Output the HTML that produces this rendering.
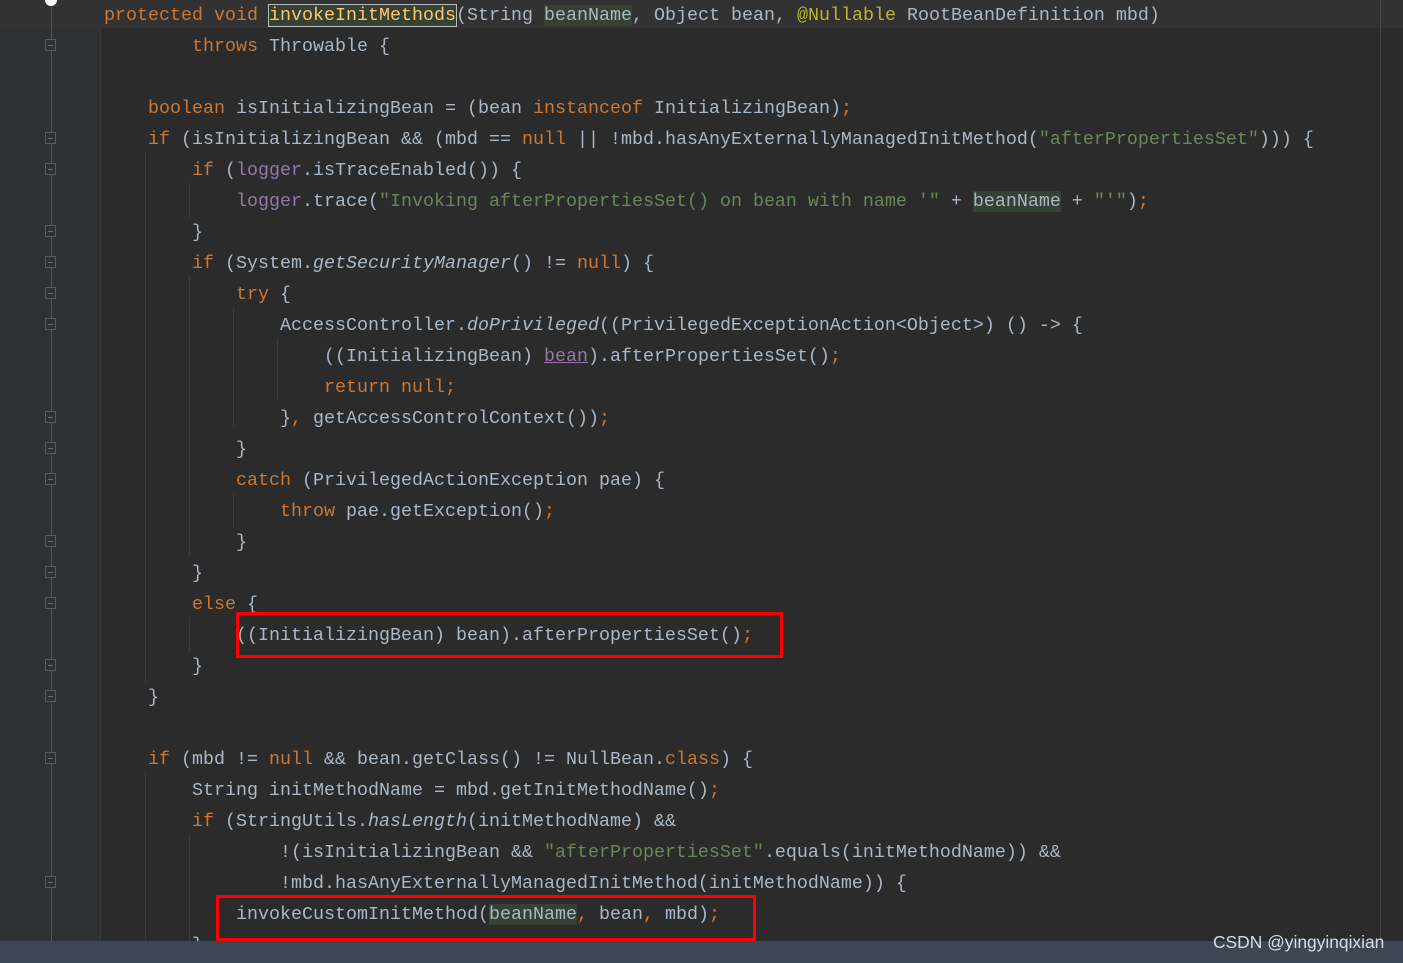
<!DOCTYPE html>
<html><head><meta charset="utf-8"><style>
body{margin:0;width:1403px;height:963px;overflow:hidden;background:#2b2b2b;position:relative;font-family:"Liberation Mono",monospace;}
#gut{position:absolute;left:0;top:0;width:100px;height:941px;background:#2f3032;}
#cur{position:absolute;left:0;top:0;width:1403px;height:28px;background:#323232;}
.ln{position:absolute;left:104px;height:31px;line-height:31px;font-size:18.33px;color:#a9b7c6;white-space:pre;}
.k{color:#cc7832}.s{color:#6a8759}.p{color:#9876aa}.m{color:#ffc66d}.a{color:#bbb529}.i{font-style:italic}
.hl{background:#344134}
.g{position:absolute;width:1px;background:#3b3b3b;}
.f{position:absolute;left:45px;width:11px;height:12px;border:1px solid #5a5a5a;box-sizing:border-box;background:#2f3032;}
.f:after{content:"";position:absolute;left:2px;top:5px;width:5px;height:1px;background:#6a6a6a;}
.red{position:absolute;border:3px solid #f00;box-sizing:border-box;}
#bar{position:absolute;left:0;top:941px;width:1403px;height:22px;background:#3c4654;}
#wm{position:absolute;left:1213px;top:932px;font-family:"Liberation Sans",sans-serif;font-size:17.4px;color:#d8dde3;}
</style></head><body>
<div id="gut"></div><div id="cur"></div>
<div class="g" style="left:51px;top:0;height:941px;background:#555"></div>
<div class="g" style="left:1380px;top:0;height:941px;background:#444"></div>
<div class="g" style="left:100px;top:28px;height:913px"></div>
<div class="g" style="left:145px;top:152px;height:530px"></div>
<div class="g" style="left:189px;top:183px;height:35px"></div>
<div class="g" style="left:189px;top:276px;height:280px"></div>
<div class="g" style="left:233px;top:307px;height:120px"></div>
<div class="g" style="left:277px;top:338px;height:62px"></div>
<div class="g" style="left:233px;top:493px;height:35px"></div>
<div class="g" style="left:189px;top:617px;height:35px"></div>
<div class="g" style="left:145px;top:772px;height:169px"></div>
<div class="g" style="left:189px;top:834px;height:107px"></div>
<div style="position:absolute;left:45px;top:-6px;width:12px;height:12px;border-radius:6px;background:#fff"></div>
<div class="f" style="top:39px"></div><div class="f" style="top:132px"></div><div class="f" style="top:163px"></div>
<div class="f" style="top:225px"></div><div class="f" style="top:256px"></div><div class="f" style="top:287px"></div>
<div class="f" style="top:318px"></div><div class="f" style="top:411px"></div><div class="f" style="top:442px"></div>
<div class="f" style="top:473px"></div><div class="f" style="top:535px"></div><div class="f" style="top:566px"></div>
<div class="f" style="top:597px"></div><div class="f" style="top:659px"></div><div class="f" style="top:690px"></div>
<div class="f" style="top:752px"></div><div class="f" style="top:876px"></div>

<div class="ln" style="top:0px"><span class="k">protected void </span><span class="m hl" style="outline:1px solid #bbb">invokeInitMethods</span>(String <span class="hl">beanName</span>, Object bean, <span class="a">@Nullable</span> RootBeanDefinition mbd)</div>
<div class="ln" style="top:31px">        <span class="k">throws</span> Throwable {</div>
<div class="ln" style="top:93px">    <span class="k">boolean</span> isInitializingBean = (bean <span class="k">instanceof</span> InitializingBean)<span class="k">;</span></div>
<div class="ln" style="top:124px">    <span class="k">if</span> (isInitializingBean &amp;&amp; (mbd == <span class="k">null</span> || !mbd.hasAnyExternallyManagedInitMethod(<span class="s">"afterPropertiesSet"</span>))) {</div>
<div class="ln" style="top:155px">        <span class="k">if</span> (<span class="p">logger</span>.isTraceEnabled()) {</div>
<div class="ln" style="top:186px">            <span class="p">logger</span>.trace(<span class="s">"Invoking afterPropertiesSet() on bean with name '"</span> + <span class="hl">beanName</span> + <span class="s">"'"</span>)<span class="k">;</span></div>
<div class="ln" style="top:217px">        }</div>
<div class="ln" style="top:248px">        <span class="k">if</span> (System.<span class="i">getSecurityManager</span>() != <span class="k">null</span>) {</div>
<div class="ln" style="top:279px">            <span class="k">try</span> {</div>
<div class="ln" style="top:310px">                AccessController.<span class="i">doPrivileged</span>((PrivilegedExceptionAction&lt;Object&gt;) () -&gt; {</div>
<div class="ln" style="top:341px">                    ((InitializingBean) <span class="p" style="text-decoration:underline">bean</span>).afterPropertiesSet()<span class="k">;</span></div>
<div class="ln" style="top:372px">                    <span class="k">return null;</span></div>
<div class="ln" style="top:403px">                }<span class="k">,</span> getAccessControlContext())<span class="k">;</span></div>
<div class="ln" style="top:434px">            }</div>
<div class="ln" style="top:465px">            <span class="k">catch</span> (PrivilegedActionException pae) {</div>
<div class="ln" style="top:496px">                <span class="k">throw</span> pae.getException()<span class="k">;</span></div>
<div class="ln" style="top:527px">            }</div>
<div class="ln" style="top:558px">        }</div>
<div class="ln" style="top:589px">        <span class="k">else</span> {</div>
<div class="ln" style="top:620px">            ((InitializingBean) bean).afterPropertiesSet()<span class="k">;</span></div>
<div class="ln" style="top:651px">        }</div>
<div class="ln" style="top:682px">    }</div>
<div class="ln" style="top:744px">    <span class="k">if</span> (mbd != <span class="k">null</span> &amp;&amp; bean.getClass() != NullBean.<span class="k">class</span>) {</div>
<div class="ln" style="top:775px">        String initMethodName = mbd.getInitMethodName()<span class="k">;</span></div>
<div class="ln" style="top:806px">        <span class="k">if</span> (StringUtils.<span class="i">hasLength</span>(initMethodName) &amp;&amp;</div>
<div class="ln" style="top:837px">                !(isInitializingBean &amp;&amp; <span class="s">"afterPropertiesSet"</span>.equals(initMethodName)) &amp;&amp;</div>
<div class="ln" style="top:868px">                !mbd.hasAnyExternallyManagedInitMethod(initMethodName)) {</div>
<div class="ln" style="top:899px">            invokeCustomInitMethod(<span class="hl">beanName</span><span class="k">,</span> bean<span class="k">,</span> mbd)<span class="k">;</span></div>
<div class="ln" style="top:930px">        }</div>
<div class="red" style="left:236px;top:612px;width:547px;height:46px"></div>
<div class="red" style="left:216px;top:895px;width:540px;height:46px"></div>
<div id="bar"></div>
<div id="wm">CSDN @yingyinqixian</div>
</body></html>
